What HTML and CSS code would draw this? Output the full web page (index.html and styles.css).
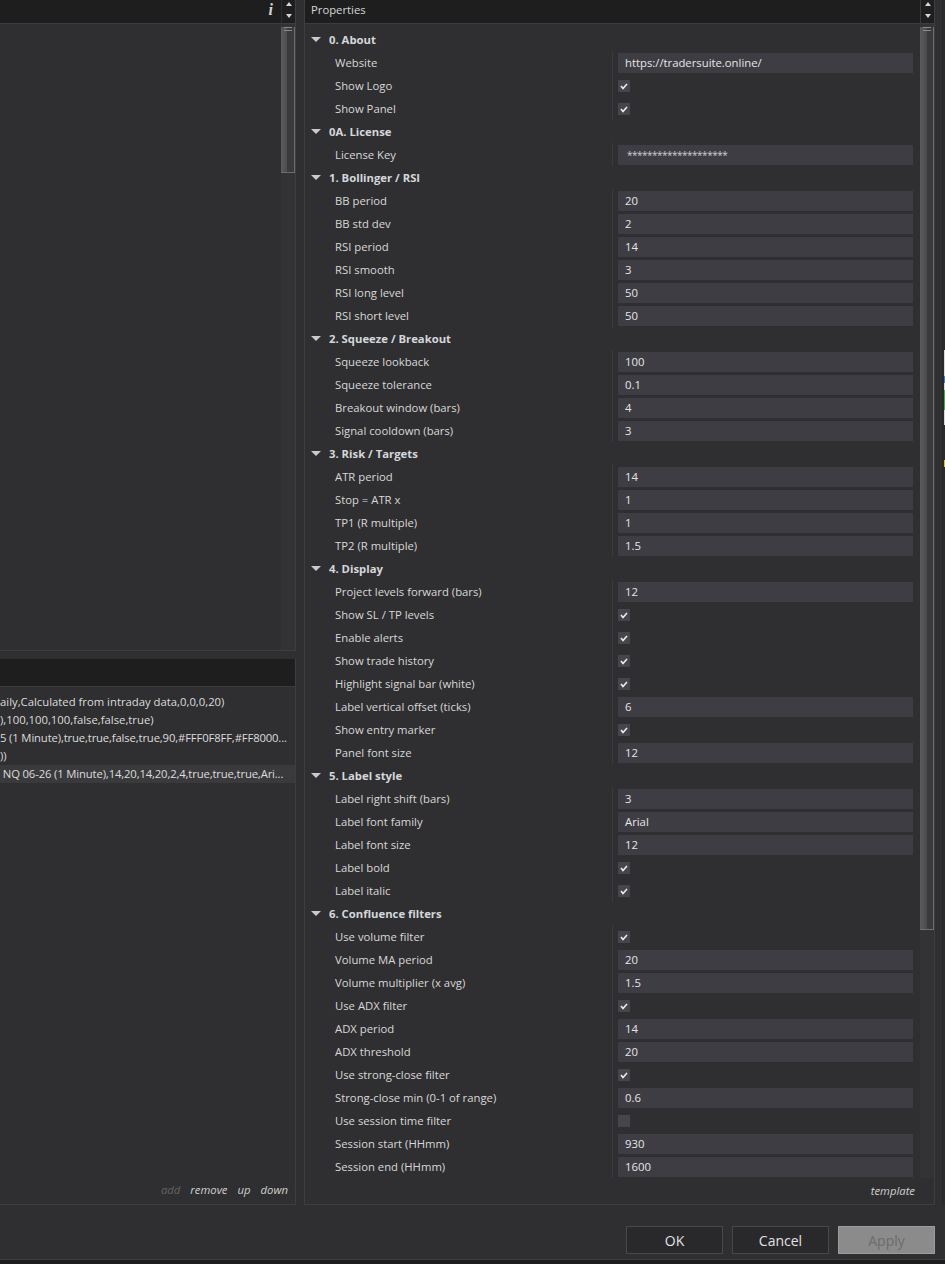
FILE: index.html
```html
<!DOCTYPE html>
<html>
<head>
<meta charset="utf-8">
<link rel="stylesheet" href="styles.css">
</head>
<body>
<div class="window">
  <div class="main">
    <div class="left">
      <section class="pane pane-top">
        <div class="hdr hdr-left">
          <span class="info">i</span>
          <div class="hdr-arrows"><span class="tri-up"></span><span class="tri-down"></span></div>
        </div>
        <div class="pane-body">
          <div class="list-empty"></div>
          <div class="vscroll"><div class="thumb thumb-left"><span class="grip"></span></div></div>
        </div>
      </section>
      <section class="pane pane-bottom">
        <div class="hdr hdr-plain"></div>
        <div class="lines">
          <div class="line">aily,Calculated from intraday data,0,0,0,20)</div>
          <div class="line">),100,100,100,false,false,true)</div>
          <div class="line tight">5 (1 Minute),true,true,false,true,90,#FFF0F8FF,#FF8000...</div>
          <div class="line">))</div>
          <div class="line tight selected"> NQ 06-26 (1 Minute),14,20,14,20,2,4,true,true,true,Ari...</div>
        </div>
        <div class="links">
          <span class="link disabled">add</span>
          <span class="link">remove</span>
          <span class="link">up</span>
          <span class="link">down</span>
        </div>
      </section>
    </div>

    <section class="props">
      <div class="hdr hdr-props">
        <span class="title">Properties</span>
        <div class="hdr-arrows"><span class="tri-up"></span><span class="tri-down"></span></div>
      </div>
      <div class="props-body">
        <div class="grid">
          <div class="group">
            <div class="sec"><span class="caret"></span>0. About</div>
            <div class="row"><span class="lbl">Website</span><span class="val"><span class="box">https://tradersuite.online/</span></span></div>
            <div class="row"><span class="lbl">Show Logo</span><span class="val"><span class="chk on"><svg viewBox="0 0 12 12"><polyline points="3,6 5,8.5 9,4"/></svg></span></span></div>
            <div class="row"><span class="lbl">Show Panel</span><span class="val"><span class="chk on"><svg viewBox="0 0 12 12"><polyline points="3,6 5,8.5 9,4"/></svg></span></span></div>
          </div>
          <div class="group">
            <div class="sec"><span class="caret"></span>0A. License</div>
            <div class="row"><span class="lbl">License Key</span><span class="val"><span class="box pw">********************</span></span></div>
          </div>
          <div class="group">
            <div class="sec"><span class="caret"></span>1. Bollinger / RSI</div>
            <div class="row"><span class="lbl">BB period</span><span class="val"><span class="box">20</span></span></div>
            <div class="row"><span class="lbl">BB std dev</span><span class="val"><span class="box">2</span></span></div>
            <div class="row"><span class="lbl">RSI period</span><span class="val"><span class="box">14</span></span></div>
            <div class="row"><span class="lbl">RSI smooth</span><span class="val"><span class="box">3</span></span></div>
            <div class="row"><span class="lbl">RSI long level</span><span class="val"><span class="box">50</span></span></div>
            <div class="row"><span class="lbl">RSI short level</span><span class="val"><span class="box">50</span></span></div>
          </div>
          <div class="group">
            <div class="sec"><span class="caret"></span>2. Squeeze / Breakout</div>
            <div class="row"><span class="lbl">Squeeze lookback</span><span class="val"><span class="box">100</span></span></div>
            <div class="row"><span class="lbl">Squeeze tolerance</span><span class="val"><span class="box">0.1</span></span></div>
            <div class="row"><span class="lbl">Breakout window (bars)</span><span class="val"><span class="box">4</span></span></div>
            <div class="row"><span class="lbl">Signal cooldown (bars)</span><span class="val"><span class="box">3</span></span></div>
          </div>
          <div class="group">
            <div class="sec"><span class="caret"></span>3. Risk / Targets</div>
            <div class="row"><span class="lbl">ATR period</span><span class="val"><span class="box">14</span></span></div>
            <div class="row"><span class="lbl">Stop = ATR x</span><span class="val"><span class="box">1</span></span></div>
            <div class="row"><span class="lbl">TP1 (R multiple)</span><span class="val"><span class="box">1</span></span></div>
            <div class="row"><span class="lbl">TP2 (R multiple)</span><span class="val"><span class="box">1.5</span></span></div>
          </div>
          <div class="group">
            <div class="sec"><span class="caret"></span>4. Display</div>
            <div class="row"><span class="lbl">Project levels forward (bars)</span><span class="val"><span class="box">12</span></span></div>
            <div class="row"><span class="lbl">Show SL / TP levels</span><span class="val"><span class="chk on"><svg viewBox="0 0 12 12"><polyline points="3,6 5,8.5 9,4"/></svg></span></span></div>
            <div class="row"><span class="lbl">Enable alerts</span><span class="val"><span class="chk on"><svg viewBox="0 0 12 12"><polyline points="3,6 5,8.5 9,4"/></svg></span></span></div>
            <div class="row"><span class="lbl">Show trade history</span><span class="val"><span class="chk on"><svg viewBox="0 0 12 12"><polyline points="3,6 5,8.5 9,4"/></svg></span></span></div>
            <div class="row"><span class="lbl">Highlight signal bar (white)</span><span class="val"><span class="chk on"><svg viewBox="0 0 12 12"><polyline points="3,6 5,8.5 9,4"/></svg></span></span></div>
            <div class="row"><span class="lbl">Label vertical offset (ticks)</span><span class="val"><span class="box">6</span></span></div>
            <div class="row"><span class="lbl">Show entry marker</span><span class="val"><span class="chk on"><svg viewBox="0 0 12 12"><polyline points="3,6 5,8.5 9,4"/></svg></span></span></div>
            <div class="row"><span class="lbl">Panel font size</span><span class="val"><span class="box">12</span></span></div>
          </div>
          <div class="group">
            <div class="sec"><span class="caret"></span>5. Label style</div>
            <div class="row"><span class="lbl">Label right shift (bars)</span><span class="val"><span class="box">3</span></span></div>
            <div class="row"><span class="lbl">Label font family</span><span class="val"><span class="box">Arial</span></span></div>
            <div class="row"><span class="lbl">Label font size</span><span class="val"><span class="box">12</span></span></div>
            <div class="row"><span class="lbl">Label bold</span><span class="val"><span class="chk on"><svg viewBox="0 0 12 12"><polyline points="3,6 5,8.5 9,4"/></svg></span></span></div>
            <div class="row"><span class="lbl">Label italic</span><span class="val"><span class="chk on"><svg viewBox="0 0 12 12"><polyline points="3,6 5,8.5 9,4"/></svg></span></span></div>
          </div>
          <div class="group">
            <div class="sec"><span class="caret"></span>6. Confluence filters</div>
            <div class="row"><span class="lbl">Use volume filter</span><span class="val"><span class="chk on"><svg viewBox="0 0 12 12"><polyline points="3,6 5,8.5 9,4"/></svg></span></span></div>
            <div class="row"><span class="lbl">Volume MA period</span><span class="val"><span class="box">20</span></span></div>
            <div class="row"><span class="lbl">Volume multiplier (x avg)</span><span class="val"><span class="box">1.5</span></span></div>
            <div class="row"><span class="lbl">Use ADX filter</span><span class="val"><span class="chk on"><svg viewBox="0 0 12 12"><polyline points="3,6 5,8.5 9,4"/></svg></span></span></div>
            <div class="row"><span class="lbl">ADX period</span><span class="val"><span class="box">14</span></span></div>
            <div class="row"><span class="lbl">ADX threshold</span><span class="val"><span class="box">20</span></span></div>
            <div class="row"><span class="lbl">Use strong-close filter</span><span class="val"><span class="chk on"><svg viewBox="0 0 12 12"><polyline points="3,6 5,8.5 9,4"/></svg></span></span></div>
            <div class="row"><span class="lbl">Strong-close min (0-1 of range)</span><span class="val"><span class="box">0.6</span></span></div>
            <div class="row"><span class="lbl">Use session time filter</span><span class="val"><span class="chk"></span></span></div>
            <div class="row"><span class="lbl">Session start (HHmm)</span><span class="val"><span class="box">930</span></span></div>
            <div class="row"><span class="lbl">Session end (HHmm)</span><span class="val"><span class="box">1600</span></span></div>
          </div>
        </div>
        <div class="vscroll vscroll-right"><div class="thumb thumb-right"><span class="grip"></span></div></div>
      </div>
      <div class="props-foot">template</div>
    </section>

    <div class="edge">
      <div class="edge-a"></div>
      <div class="edge-line"></div>
      <div class="edge-b">
        <span class="mark m-white"></span>
        <span class="mark m-blue"></span>
        <span class="mark m-green"></span>
        <span class="mark m-yellow"></span>
      </div>
    </div>
  </div>

  <div class="buttons">
    <button class="btn">OK</button>
    <button class="btn">Cancel</button>
    <button class="btn btn-disabled">Apply</button>
  </div>
  <div class="statusline"></div>
</div>
</body>
</html>
```

FILE: styles.css
```css
* { box-sizing: border-box; }

html, body {
  margin: 0;
  padding: 0;
}

body {
  width: 945px;
  height: 1264px;
  overflow: hidden;
  background: #2f2f31;
  font-family: "Open Sans", "Noto Sans", sans-serif;
  font-size: 11.3px;
  color: #d6d6d6;
}

.window {
  display: flex;
  flex-direction: column;
  height: 1264px;
}

.main {
  display: flex;
  height: 1205px;
}

/* ---------- left column ---------- */
.left {
  width: 296px;
  display: flex;
  flex-direction: column;
  flex-shrink: 0;
}

.pane {
  background: #2f2f31;
  border-right: 1px solid #3e3e41;
  border-bottom: 1px solid #3e3e41;
  display: flex;
  flex-direction: column;
}

.pane-top {
  height: 651px;
}

.pane-bottom {
  margin-top: 8px;
  flex: 1;
}

.hdr {
  height: 24px;
  background: #1e1e1f;
  border-bottom: 1px solid #3c3c3f;
  display: flex;
  align-items: stretch;
  flex-shrink: 0;
}

.hdr-left {
  justify-content: flex-end;
}

.info {
  font-family: "Liberation Serif", serif;
  font-style: italic;
  font-weight: bold;
  font-size: 16px;
  line-height: 19px;
  color: #d4d4d4;
  margin-right: 8px;
}

.hdr-arrows {
  width: 14px;
  border-left: 1px solid #2e2e30;
  display: flex;
  flex-direction: column;
  align-items: center;
  justify-content: space-between;
  padding: 2px 0 5px 1px;
}

.tri-up {
  width: 0;
  height: 0;
  border-left: 3.5px solid transparent;
  border-right: 3.5px solid transparent;
  border-bottom: 4px solid #d6d6d6;
}

.tri-down {
  width: 0;
  height: 0;
  border-left: 3.5px solid transparent;
  border-right: 3.5px solid transparent;
  border-top: 4px solid #d6d6d6;
}

.pane-body {
  flex: 1;
  display: flex;
}

.list-empty {
  flex: 1;
}

.vscroll {
  width: 14px;
  background: #333335;
  flex-shrink: 0;
}

.thumb {
  background: linear-gradient(to right, #5b5b5d 0, #4c4c4e 50%, #3a3a3c 50%, #3a3a3c 100%);
  border-right: 1px solid #6e6e70;
  border-bottom: 1px solid #6e6e70;
}

.thumb-left {
  height: 146px;
}

.thumb-right {
  height: 903px;
}

.grip {
  display: block;
  margin: 3px 0 0 3px;
  width: 8px;
  height: 4px;
  border-top: 1px solid #8a8a8c;
  border-bottom: 1px solid #8a8a8c;
}

.hdr-plain {
  height: 28px;
}

.lines {
  padding-top: 6px;
  overflow: hidden;
}

.line {
  height: 18px;
  line-height: 18px;
  white-space: pre;
  overflow: hidden;
  color: #dcdcdc;
}

.line.tight {
  letter-spacing: -0.15px;
}

.line.selected {
  background: #3a3a3c;
}

.links {
  margin-top: auto;
  height: 26px;
  line-height: 24px;
  display: flex;
  justify-content: flex-end;
  gap: 10px;
  padding-right: 7px;
  font-style: italic;
}

.link {
  color: #cfcfcf;
}

.link.disabled {
  color: #626264;
}

/* ---------- properties ---------- */
.props {
  margin-left: 8px;
  width: 631px;
  flex-shrink: 0;
  background: #2f2f31;
  border-left: 1px solid #3e3e41;
  border-right: 1px solid #3e3e41;
  border-bottom: 1px solid #3e3e41;
  display: flex;
  flex-direction: column;
}

.hdr-props {
  justify-content: space-between;
}

.title {
  padding-left: 6px;
  line-height: 19px;
  color: #d6d6d6;
}

.hdr-props .hdr-arrows {
  border-left: 1px solid #3a3a3c;
}

.props-body {
  flex: 1;
  display: flex;
  min-height: 0;
}

.grid {
  flex: 1;
  padding-top: 4px;
}

.sec {
  height: 23px;
  display: flex;
  align-items: center;
  font-weight: bold;
  color: #d4d7db;
}

.caret {
  width: 0;
  height: 0;
  margin-left: 6px;
  margin-right: 8px;
  border-left: 5px solid transparent;
  border-right: 5px solid transparent;
  border-top: 5px solid #cacaca;
}

.row {
  height: 23px;
  display: flex;
}

.lbl {
  width: 307px;
  padding-left: 30px;
  line-height: 23px;
  white-space: nowrap;
  color: #d8d8d8;
}

.val {
  flex: 1;
  border-left: 1px solid #3b3b3e;
  padding-left: 5px;
  display: flex;
  align-items: flex-start;
}

.box {
  margin-top: 2px;
  width: 295px;
  height: 20px;
  line-height: 20px;
  padding-left: 7px;
  background: #3e3d44;
  color: #e6e6e6;
  white-space: nowrap;
}

.box.pw {
  padding-left: 9px;
  font-size: 10px;
  letter-spacing: -0.5px;
  color: #cfcfcf;
}

.chk {
  margin-top: 6px;
  width: 12px;
  height: 12px;
  background: #46454c;
  display: block;
}

.chk.on svg {
  display: block;
  width: 12px;
  height: 12px;
}

.chk svg polyline {
  fill: none;
  stroke: #ececec;
  stroke-width: 1.6;
}

.props-foot {
  height: 26px;
  line-height: 25px;
  text-align: right;
  padding-right: 19px;
  font-style: italic;
  color: #cfcfcf;
}

/* ---------- right edge (next window) ---------- */
.edge {
  flex: 1;
  display: flex;
}

.edge-a {
  width: 7px;
  background: #2f2f31;
}

.edge-line {
  width: 1px;
  background: #262628;
}

.edge-b {
  flex: 1;
  position: relative;
  background: #2b2b2d;
}

.mark {
  position: absolute;
  left: 1px;
  width: 2px;
}

.m-white {
  top: 350px;
  height: 75px;
  background: #d8d8d8;
}

.m-blue {
  top: 376px;
  height: 7px;
  background: #3a7bd5;
}

.m-green {
  top: 390px;
  height: 20px;
  background: #3cb043;
}

.m-yellow {
  top: 460px;
  height: 7px;
  background: #e0c020;
}

/* ---------- buttons ---------- */
.buttons {
  height: 54px;
  display: flex;
  justify-content: flex-end;
  align-items: flex-start;
  gap: 9px;
  padding: 21px 10px 0 0;
}

.btn {
  width: 97px;
  height: 28px;
  background: #29292b;
  border: 1px solid #48484b;
  color: #e2e2e2;
  font-family: "Open Sans", "Noto Sans", sans-serif;
  font-size: 14px;
  padding: 0;
}

.btn-disabled {
  background: #8b8b8b;
  border-color: #9c9c9c;
  color: #6c6c6c;
}

.statusline {
  flex: 1;
  background: #1d1d1e;
  border-top: 1px solid #3c3c3e;
}
```
